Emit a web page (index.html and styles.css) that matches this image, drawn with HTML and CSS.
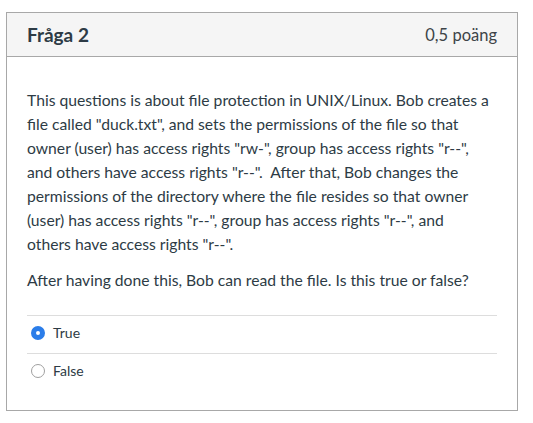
FILE: index.html
```html
<!DOCTYPE html>
<html>
<head>
<meta charset="utf-8">
<link rel="stylesheet" href="styles.css">
</head>
<body>
<div class="question">
  <div class="header">
    <span class="title">Fråga 2</span>
    <span class="points">0,5 poäng</span>
  </div>
  <div class="body">
    <p class="text">This questions is about file protection in UNIX/Linux. Bob creates a file called "duck.txt", and sets the permissions of the file so that owner (user) has access rights "rw-", group has access rights "r--", and others have access rights "r--".&nbsp; After that, Bob changes the permissions of the directory where the file resides so that owner (user) has access rights "r--", group has access rights "r--", and others have access rights "r--".</p>
    <p class="text">After having done this, Bob can read the file. Is this true or false?</p>
    <div class="answers">
      <div class="answer">
        <span class="radio checked"></span>
        <span class="label">True</span>
      </div>
      <div class="answer">
        <span class="radio"></span>
        <span class="label">False</span>
      </div>
    </div>
  </div>
</div>
</body>
</html>
```

FILE: styles.css
```css
html, body {
  margin: 0;
  background: #ffffff;
}
body {
  padding: 12px 0 0 6px;
  font-family: Lato, "Open Sans", sans-serif;
  color: #2d3b45;
}
.question {
  width: 512px;
  box-sizing: border-box;
  border: 1px solid #a8a8a8;
}
.header {
  height: 44px;
  box-sizing: border-box;
  display: flex;
  align-items: center;
  justify-content: space-between;
  padding: 0 20px;
  background: #f5f5f5;
  border-bottom: 1px solid #a8a8a8;
}
.title {
  font-weight: 700;
  font-size: 19px;
  color: #2d3b45;
}
.points {
  font-size: 16.5px;
  color: #3d4448;
}
.body {
  padding: 31px 20px 19px;
}
.text {
  margin: 0 6px 12px 0;
  font-size: 15.7px;
  line-height: 24px;
}
.answers {
  margin-top: 23px;
}
.answer {
  display: flex;
  align-items: center;
  gap: 8px;
  padding: 8px 0 11px 4px;
  line-height: 18px;
  border-top: 1px solid #dddddd;
}
.radio {
  width: 14px;
  height: 14px;
  box-sizing: border-box;
  border-radius: 50%;
  border: 1px solid #a0a0a0;
  background: #fff;
}
.radio.checked {
  border: 5px solid #2b7de9;
  background: #fff;
}
.label {
  font-size: 14px;
  color: #2d3b45;
}
```
